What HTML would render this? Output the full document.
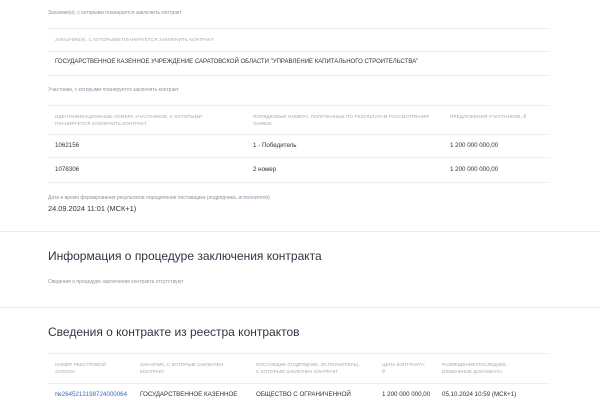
<!DOCTYPE html>
<html><head><meta charset="utf-8"><style>
*{margin:0;padding:0;box-sizing:border-box}
body{width:600px;height:400px;overflow:hidden;background:#fff;font-family:"Liberation Sans","DejaVu Sans",sans-serif;color:#333;position:relative}
.a{position:absolute;white-space:nowrap}
.s{font-size:5px;color:#8a93a3}
.h{font-size:4.6px;color:#a0a6b0;text-transform:uppercase;letter-spacing:.1px;line-height:7px}
.t{font-size:6.2px;color:#333}
.l{position:absolute;left:48px;width:502px;height:1px;background:#eceef1}
.sep{position:absolute;left:0;width:600px;height:1px;background:#e8eaed}
.ti{font-size:12px;color:#334}
</style></head><body>
<div class="a s" style="left:48px;top:10px">Заказчик(и), с которыми планируется заключить контракт</div>
<div class="l" style="top:28px"></div>
<div class="a h" style="left:55px;top:36px">Заказчик(и), с которыми планируется заключить контракт</div>
<div class="l" style="top:51px"></div>
<div class="a t" style="left:55px;top:59px;font-size:6px">ГОСУДАРСТВЕННОЕ КАЗЕННОЕ УЧРЕЖДЕНИЕ САРАТОВСКОЙ ОБЛАСТИ "УПРАВЛЕНИЕ КАПИТАЛЬНОГО СТРОИТЕЛЬСТВА"</div>
<div class="l" style="top:75px"></div>
<div class="a s" style="left:48px;top:87px">Участники, с которыми планируется заключить контракт</div>
<div class="l" style="top:105px"></div>
<div class="a h" style="left:55px;top:113px">Идентификационные номера участников, с которыми<br>планируется заключить контракт</div>
<div class="a h" style="left:253px;top:113px">Порядковые номера, полученные по результатам рассмотрения<br>заявок</div>
<div class="a h" style="left:450px;top:113px">Предложения участников, ₽</div>
<div class="l" style="top:134px"></div>
<div class="a t" style="left:55px;top:142px">1062156</div>
<div class="a t" style="left:253px;top:142px">1 - Победитель</div>
<div class="a t" style="left:450px;top:142px">1 200 000 000,00</div>
<div class="l" style="top:157px"></div>
<div class="a t" style="left:55px;top:166px">1078306</div>
<div class="a t" style="left:253px;top:166px">2 номер</div>
<div class="a t" style="left:450px;top:166px">1 200 000 000,00</div>
<div class="l" style="top:182px"></div>
<div class="a s" style="left:48px;top:195px">Дата и время формирования результатов определения поставщика (подрядчика, исполнителя)</div>
<div class="a" style="left:48px;top:204px;font-size:7.4px;color:#333">24.09.2024 11:01 (МСК+1)</div>
<div class="sep" style="top:231px"></div>
<div class="a ti" style="left:48px;top:249px">Информация о процедуре заключения контракта</div>
<div class="a s" style="left:48px;top:279px">Сведения о процедуре заключения контракта отсутствуют</div>
<div class="sep" style="top:307px"></div>
<div class="a ti" style="left:48px;top:325px">Сведения о контракте из реестра контрактов</div>
<div class="l" style="top:353px"></div>
<div class="a h" style="left:55px;top:361px">Номер реестровой<br>записи</div>
<div class="a h" style="left:140px;top:361px">Заказчик, с которым заключен<br>контракт</div>
<div class="a h" style="left:256px;top:361px">Поставщик (подрядчик, исполнитель),<br>с которым заключен контракт</div>
<div class="a h" style="left:382px;top:361px">Цена контракта,<br>₽</div>
<div class="a h" style="left:442px;top:361px">Размещение/последнее<br>изменение документа</div>
<div class="l" style="top:383px"></div>
<div class="a t" style="left:55px;top:391px;color:#3a6db5">№2645213198724000064</div>
<div class="a t" style="left:140px;top:391px">ГОСУДАРСТВЕННОЕ КАЗЕННОЕ</div>
<div class="a t" style="left:256px;top:391px">ОБЩЕСТВО С ОГРАНИЧЕННОЙ</div>
<div class="a t" style="left:382px;top:391px">1 200 000 000,00</div>
<div class="a t" style="left:442px;top:391px">05.10.2024 10:59 (МСК+1)</div>
</body></html>
